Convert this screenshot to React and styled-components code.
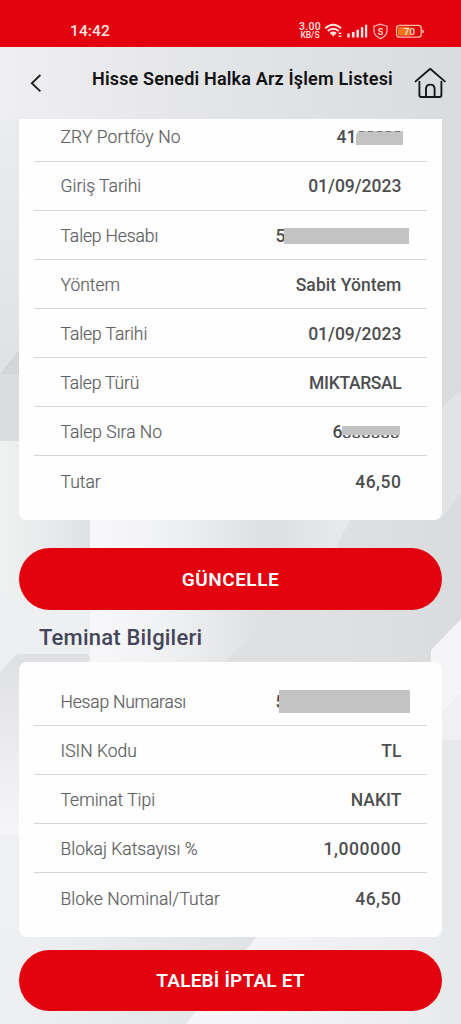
import React from "react";
import styled, { createGlobalStyle } from "styled-components";

const COLORS = {
  red: "#e3030f",
  label: "#606163",
  value: "#4d4e50",
  heading: "#44465a",
  line: "#d4d6d7",
  mask: "#c3c3c3",
};

const requestRows = [
  { label: "ZRY Portföy No", value: "41", mask: "portfolio", labelSpacing: 0.1 },
  { label: "Giriş Tarihi", value: "01/09/2023" },
  { label: "Talep Hesabı", value: "5", mask: "account", labelSpacing: -0.12 },
  { label: "Yöntem", value: "Sabit Yöntem", spacing: 0.08 },
  { label: "Talep Tarihi", value: "01/09/2023", labelSpacing: -0.08 },
  { label: "Talep Türü", value: "MIKTARSAL", spacing: -0.35, labelSpacing: -0.15 },
  { label: "Talep Sıra No", value: "6", mask: "order" },
  { label: "Tutar", value: "46,50", spacing: 0.5 },
];

const collateralRows = [
  { label: "Hesap Numarası", value: "5", mask: "number", labelSpacing: -0.2 },
  { label: "ISIN Kodu", value: "TL" },
  { label: "Teminat Tipi", value: "NAKIT" },
  { label: "Blokaj Katsayısı %", value: "1,000000", spacing: 0.55 },
  { label: "Bloke Nominal/Tutar", value: "46,50", spacing: 0.5, labelSpacing: 0.08 },
];

const Backdrop = () => (
  <BackdropSvg viewBox="0 0 461 1024" preserveAspectRatio="none">
    <defs>
      <linearGradient id="base" x1="0" y1="0" x2="1" y2="0">
        <stop offset="0" stopColor="#efeff1" />
        <stop offset="0.5" stopColor="#e3e4e6" />
        <stop offset="1" stopColor="#dadbdd" />
      </linearGradient>
      <linearGradient id="left" x1="0" y1="0" x2="0" y2="1">
        <stop offset="0" stopColor="#ebecee" />
        <stop offset="1" stopColor="#dfe1e3" />
      </linearGradient>
      <linearGradient id="pillar" x1="0" y1="0" x2="1" y2="0">
        <stop offset="0" stopColor="#f8f8fa" />
        <stop offset="0.3" stopColor="#f1f2f3" />
        <stop offset="0.75" stopColor="#dfe0e2" />
        <stop offset="1" stopColor="#dedfe1" />
      </linearGradient>
      <linearGradient id="low" x1="0" y1="0" x2="0" y2="1">
        <stop offset="0" stopColor="#dfe0e3" />
        <stop offset="1" stopColor="#f6f6f8" />
      </linearGradient>
      <linearGradient id="side" x1="0" y1="0" x2="1" y2="0">
        <stop offset="0" stopColor="#f0f1f1" />
        <stop offset="0.45" stopColor="#e9ebec" />
        <stop offset="1" stopColor="#dfe1e3" />
      </linearGradient>
      <linearGradient id="shine" x1="0" y1="0" x2="1" y2="0">
        <stop offset="0" stopColor="#dedfe1" />
        <stop offset="1" stopColor="#e9eaec" />
      </linearGradient>
      <linearGradient id="floor" x1="0" y1="0" x2="1" y2="0">
        <stop offset="0" stopColor="#f7f7f9" />
        <stop offset="0.5" stopColor="#f5f5f7" />
        <stop offset="1" stopColor="#e9eaec" />
      </linearGradient>
      <linearGradient id="facet" x1="0" y1="0" x2="1" y2="0">
        <stop offset="0" stopColor="#eff0f1" />
        <stop offset="1" stopColor="#e1e2e5" />
      </linearGradient>
    </defs>
    <rect width="461" height="1024" fill="url(#base)" />
    <rect y="119" width="40" height="255" fill="url(#left)" />
    <path d="M0 374H40V442H0Z" fill="#dadcde" />
    <path d="M0 374 19 350V374Z" fill="#d3d5d7" />
    <path d="M0 441H90V660H0Z" fill="url(#side)" />
    <path d="M0 590 20 600H90V656H18L0 672Z" fill="#eeeff1" />
    <path d="M90 519H320V662H90Z" fill="url(#pillar)" />
    <path d="M272 519H350L330 560H290Z" fill="url(#shine)" />
    <path d="M225 662 270 617H340V662Z" fill="#dfe0e2" />
    <path d="M461 390 441 408V520L461 492Z" fill="#e2e3e5" />
    <path d="M461 619 431 650V670H461Z" fill="#f5f5f7" />
    <path d="M430 662H461V694L441 714H430Z" fill="#f5f5f7" />
    <path d="M461 694 441 714V740H461Z" fill="#f0f0f2" />
    <path d="M0 672 17 654H88V662H30V835H0Z" fill="url(#low)" />
    <path d="M0 835H60V1024H0Z" fill="#eff0f1" />
    <path d="M20 930H461V1024H20Z" fill="url(#floor)" />
    <path d="M0 930H262L186 1024H0Z" fill="url(#facet)" />
    <path d="M441 740H461V1024H441Z" fill="#e8e9eb" />
  </BackdropSvg>
);

const StatusIcons = () => (
  <StatusSvg width="104" height="20" viewBox="0 0 104 20">
    <g fill="none" stroke="#ffe3e0" strokeLinecap="butt">
      <path d="M1.2 7.2Q9.2 .2 17.2 7.2" strokeWidth="2" />
      <path d="M3.8 10Q9.2 5.4 14.8 10" strokeWidth="2" />
      <path d="M6.4 12.8Q9.2 10.4 12.1 12.8" strokeWidth="2" />
      <path
        d="M56.5 3.2 63 5.2V10.4Q62.7 14.8 56.5 17.6 50.3 14.8 50 10.4V5.2Z"
        stroke="#ffb9b4"
        strokeWidth="1.2"
      />
      <rect x="72.6" y="4.4" width="24.6" height="11.8" rx="3" stroke="#ffc0a8" strokeWidth="1.3" />
    </g>
    <path d="M7 12.6 9.2 15.4 11.8 12.6Z" fill="#ffe3e0" />
    <path d="M14.5 11.5h3v1.5h-3zM14.5 14.5h3v1.5h-3z" fill="#ffc9c4" />
    <path
      d="M23.3 12.6h2.4v3.8h-2.4zM27.9 11h2.6v5.4h-2.6zM32.4 8.8h2.6v7.6h-2.6zM36.9 6.2h2.4v10.2h-2.4zM41 3.8h2.2v12.6H41z"
      fill="#ffe3e0"
    />
    <rect x="74" y="5.8" width="13" height="9" rx="1.6" fill="#f4731c" />
    <path d="M98.4 8.4v4Q100 12 100 10.4T98.4 8.4Z" fill="#ffd0c0" />
    <IconText x="56.5" y="13.6" $size={9}>S</IconText>
    <IconText x="85.4" y="13.8" $size={9.8}>70</IconText>
  </StatusSvg>
);

const HomeIcon = () => (
  <svg width="34" height="34" viewBox="0 0 34 34" fill="none" stroke="#17181a">
    <path d="M2.6 15.4 17.2 2.8 31.8 15.4" strokeWidth="1.9" strokeLinecap="round" strokeLinejoin="round" />
    <path d="M6.4 15.6V29.3Q6.4 31 8.2 31H26.6Q28.4 31 28.4 29.3V15.6" strokeWidth="1.9" strokeLinecap="round" />
    <path d="M13 30.8V23Q13 18.6 17.3 18.6T21.6 23V30.8" strokeWidth="1.9" />
  </svg>
);

const BackIcon = () => (
  <svg width="14" height="20" viewBox="0 0 14 20" fill="none">
    <path d="M11.4 2 2.8 10.2 11.4 18.4" stroke="#222" strokeWidth="1.9" />
  </svg>
);

const Row = ({ label, value, mask, spacing, labelSpacing }) => (
  <RowWrapper>
    <Label $spacing={labelSpacing}>{label}</Label>
    <Value $mask={mask} $spacing={spacing}>
      {value}
      {mask && <Mask $kind={mask} />}
    </Value>
  </RowWrapper>
);

export default function App() {
  return (
    <Screen>
      <GlobalStyle />
      <Backdrop />
      <StatusBar>
        <Time>14:42</Time>
        <StatusRight>
          <Speed>
            <b>3.00</b>
            <small>KB/S</small>
          </Speed>
          <StatusIcons />
        </StatusRight>
      </StatusBar>
      <Header>
        <BackButton>
          <BackIcon />
        </BackButton>
        <Title>Hisse Senedi Halka Arz İşlem Listesi</Title>
        <HomeButton>
          <HomeIcon />
        </HomeButton>
      </Header>
      <Content>
        <Card $scrolled>
          {requestRows.map((row) => (
            <Row key={row.label} {...row} />
          ))}
        </Card>
        <ActionButton $top={28} $spacing={0.5}>GÜNCELLE</ActionButton>
        <SectionTitle>Teminat Bilgileri</SectionTitle>
        <Card>
          {collateralRows.map((row) => (
            <Row key={row.label} {...row} />
          ))}
        </Card>
        <ActionButton $top={12.5} $spacing={0.2}>TALEBİ İPTAL ET</ActionButton>
      </Content>
    </Screen>
  );
}

const GlobalStyle = createGlobalStyle`
  * {
    box-sizing: border-box;
  }
  body {
    margin: 0;
    font-family: Roboto, sans-serif;
    font-variant-ligatures: none;
  }
`;

const Screen = styled.div`
  position: relative;
  display: flex;
  flex-direction: column;
  width: 461px;
  height: 1024px;
  overflow: hidden;
`;

const BackdropSvg = styled.svg`
  position: absolute;
  inset: 0;
  width: 100%;
  height: 100%;
  z-index: -1;
`;

const StatusBar = styled.div`
  display: flex;
  justify-content: space-between;
  align-items: flex-start;
  height: 47px;
  padding: 21px 33px 0 70px;
  background: ${COLORS.red};
  color: #ffe3e0;
`;

const Time = styled.div`
  font-size: 15.5px;
  line-height: 21px;
  font-weight: 500;
  letter-spacing: 0.1px;
`;

const StatusRight = styled.div`
  display: flex;
  gap: 3px;
`;

const Speed = styled.div`
  display: flex;
  flex-direction: column;
  align-items: center;
  padding-top: 1px;
  b {
    font-size: 10.5px;
    line-height: 10px;
    font-weight: 500;
    letter-spacing: 0.3px;
  }
  small {
    font-size: 8.5px;
    line-height: 7px;
    font-weight: 500;
  }
`;

const StatusSvg = styled.svg`
  display: block;
`;

const IconText = styled.text`
  font-size: ${(p) => p.$size}px;
  font-weight: 600;
  fill: #ffdcc8;
  text-anchor: middle;
`;

const Header = styled.header`
  display: flex;
  align-items: flex-start;
  height: 72px;
  padding: 0 14px 0 29px;
`;

const BackButton = styled.div`
  width: 63px;
  padding-top: 26px;
`;

const Title = styled.h1`
  flex: 1;
  margin: 0;
  padding-top: 20px;
  font-size: 18px;
  line-height: 24px;
  font-weight: 600;
  letter-spacing: 0.17px;
  white-space: nowrap;
  color: #111214;
`;

const HomeButton = styled.div`
  padding-top: 19px;
`;

const Content = styled.main`
  display: flex;
  flex-direction: column;
  padding: 0 19px;
`;

const Card = styled.section`
  display: flex;
  flex-direction: column;
  justify-content: flex-end;
  height: ${(p) => (p.$scrolled ? 401 : 275)}px;
  padding: 0 15px 14.7px;
  overflow: hidden;
  background: #fefefe;
  border-radius: ${(p) => (p.$scrolled ? "0 0 8px 8px" : "8px")};
`;

const RowWrapper = styled.div`
  display: flex;
  flex-shrink: 0;
  justify-content: space-between;
  align-items: center;
  height: 49.1px;
  padding: 1.5px 25.6px 0 26.5px;
  font-size: 17.5px;
  &:not(:last-child) {
    border-bottom: 1.5px solid ${COLORS.line};
  }
`;

const Label = styled.span`
  font-weight: 300;
  -webkit-text-stroke: 0.2px ${COLORS.label};
  letter-spacing: ${(p) => p.$spacing || 0}px;
  color: ${COLORS.label};
`;

const valueOffsets = {
  portfolio: 45,
  account: 116,
  order: 59,
  number: 116,
};

const Value = styled.span`
  position: relative;
  display: flex;
  margin-right: ${(p) => valueOffsets[p.$mask] || 0}px;
  font-weight: 500;
  letter-spacing: ${(p) => p.$spacing || 0}px;
  color: ${COLORS.value};
`;

const maskSizes = {
  portfolio: "left: 19px; top: 4px; width: 47px; height: 13.5px; border-radius: 5px 0 0 0;",
  account: "left: 8.5px; top: 2.5px; width: 125px; height: 15.5px;",
  order: "left: 10px; top: 4px; width: 58px; height: 9px;",
  number: "left: 3.5px; top: -1.5px; width: 131px; height: 23px;",
};

const Mask = styled.i`
  position: absolute;
  background: ${COLORS.mask};
  ${(p) => maskSizes[p.$kind]}
  ${(p) =>
    p.$kind === "order" &&
    `&::after {
      content: "";
      position: absolute;
      left: 0;
      right: 0;
      top: 9px;
      height: 4px;
      background: radial-gradient(ellipse at 50% 0, transparent 2px, #5c5d5f 2.4px, #5c5d5f 3.8px, transparent 4.2px) 0 0 / 9.6px 4px;
    }`}
  ${(p) =>
    p.$kind === "portfolio" &&
    `&::after {
      content: "";
      position: absolute;
      left: 3px;
      right: 2px;
      top: -0.5px;
      height: 1px;
      background: repeating-linear-gradient(90deg, #77787a 0 5px, transparent 5px 9px);
    }`}
`;

const ActionButton = styled.button`
  flex-shrink: 0;
  height: 61.5px;
  margin-top: ${(p) => p.$top}px;
  padding: 1px 0 0;
  border: 0;
  border-radius: 31px;
  background: ${COLORS.red};
  color: #fff;
  font-family: inherit;
  font-size: 19px;
  font-weight: 600;
  letter-spacing: ${(p) => p.$spacing}px;
`;

const SectionTitle = styled.h2`
  margin: 14px 0 0;
  padding: 0 0 10.5px 20px;
  font-size: 22px;
  line-height: 28px;
  font-weight: 500;
  letter-spacing: 0.2px;
  color: ${COLORS.heading};
`;
